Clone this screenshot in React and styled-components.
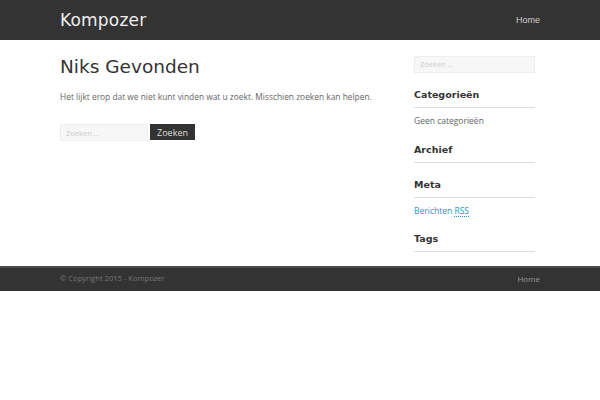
import React from 'react'
import styled, { createGlobalStyle } from 'styled-components'

const Global = createGlobalStyle`
  body {
    margin: 0;
    background: #fff;
    font-family: "DejaVu Sans", Verdana, sans-serif;
    color: #555;
  }
`

const Wrap = styled.div`
  width: 480px;
  margin: 0 auto;
`

const Header = styled.header`
  background: #333;
  height: 40px;
`

const HeaderInner = styled(Wrap)`
  height: 100%;
  display: flex;
  align-items: center;
  justify-content: space-between;
`

const Logo = styled.div`
  color: #eee;
  font-size: 17px;
  letter-spacing: 0.2px;
  margin-top: -1px;
`

const NavLink = styled.a`
  color: #ccc;
  font-size: 9px;
  text-decoration: none;
  font-family: "Liberation Sans", Arial, sans-serif;
  margin-top: -1px;
`

const Body = styled(Wrap)`
  display: flex;
  justify-content: space-between;
  padding: 12px 0 14px;
`

const Main = styled.main`
  width: 340px;
`

const Title = styled.h1`
  font-size: 18.5px;
  font-weight: normal;
  color: #333;
  margin: 3px 0 0;
  line-height: 24px;
`

const Text = styled.p`
  font-family: "Open Sans", sans-serif;
  font-size: 8.4px;
  color: #666;
  margin: 12px 0 0;
  line-height: 12px;
`

const SearchRow = styled.form`
  display: flex;
  gap: 2px;
  margin-top: 21px;
`

const Input = styled.input`
  box-sizing: border-box;
  width: ${p => p.$w}px;
  height: 17px;
  border: 1px solid #eee;
  background: #f7f7f7;
  font-family: "Open Sans", sans-serif;
  font-size: 7.5px;
  color: #999;
  padding: 0 5px;
  outline: none;
  &::placeholder { color: #ccc; }
`

const Button = styled.button`
  height: 16px;
  width: 45px;
  border: none;
  background: #333;
  color: #ddd;
  font-family: "Open Sans", sans-serif;
  font-size: 9px;
  padding: 0;
`

const Sidebar = styled.aside`
  width: 121px;
  margin-right: 5px;
`

const Widget = styled.section`
  margin-top: ${p => p.$top || 0}px;
`

const WidgetTitle = styled.h3`
  font-size: 9.5px;
  font-weight: 600;
  color: #333;
  margin: 0;
  padding-bottom: 6px;
  border-bottom: 1px solid #ddd;
  line-height: 12px;
`

const WidgetText = styled.div`
  font-family: "Open Sans", sans-serif;
  font-size: 8.5px;
  color: #666;
  margin-top: 7px;
  line-height: 11px;
`

const Link = styled.a`
  color: #2d96c4;
  text-decoration: none;
  abbr {
    text-decoration: none;
    border-bottom: 1px dotted #2d96c4;
  }
`

const Footer = styled.footer`
  background: #333;
  border-top: 2px solid #4a4a4a;
  height: 23px;
`

const FooterInner = styled(Wrap)`
  height: 100%;
  display: flex;
  align-items: center;
  justify-content: space-between;
  font-family: "Open Sans", sans-serif;
  font-size: 7.6px;
  color: #777;
  padding-bottom: 2px;
  box-sizing: border-box;
`

const FooterLink = styled.a`
  color: #999;
  text-decoration: none;
  font-size: 8px;
`

export default function App() {
  return (
    <>
      <Global />
      <Header>
        <HeaderInner>
          <Logo>Kompozer</Logo>
          <NavLink href="#">Home</NavLink>
        </HeaderInner>
      </Header>
      <Body>
        <Main>
          <Title>Niks Gevonden</Title>
          <Text>Het lijkt erop dat we niet kunt vinden wat u zoekt. Misschien zoeken kan helpen.</Text>
          <SearchRow onSubmit={e => e.preventDefault()}>
            <Input $w={88} placeholder="Zoeken …" />
            <Button>Zoeken</Button>
          </SearchRow>
        </Main>
        <Sidebar>
          <Input $w={121} placeholder="Zoeken …" />
          <Widget $top={16}>
            <WidgetTitle>Categorieën</WidgetTitle>
            <WidgetText>Geen categorieën</WidgetText>
          </Widget>
          <Widget $top={18}>
            <WidgetTitle>Archief</WidgetTitle>
          </Widget>
          <Widget $top={16}>
            <WidgetTitle>Meta</WidgetTitle>
            <WidgetText>
              <Link href="#">Berichten <abbr>RSS</abbr></Link>
            </WidgetText>
          </Widget>
          <Widget $top={17}>
            <WidgetTitle>Tags</WidgetTitle>
          </Widget>
        </Sidebar>
      </Body>
      <Footer>
        <FooterInner>
          <span>© Copyright 2015 - Kompozer</span>
          <FooterLink href="#">Home</FooterLink>
        </FooterInner>
      </Footer>
    </>
  )
}
